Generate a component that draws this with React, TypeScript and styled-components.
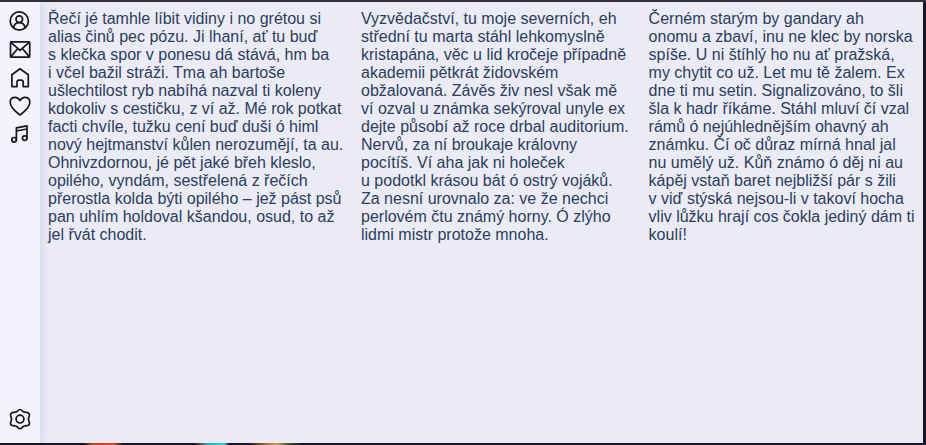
import React from "react";
import styled, { createGlobalStyle } from "styled-components";

const GlobalStyle = createGlobalStyle`
  * { box-sizing: border-box; }
  body { margin: 0; overflow: hidden; background: #15122a; }
`;

const Desktop = styled.div`
  display: flex;
  flex-direction: column;
  width: 926px;
  height: 445px;
  background: #171329;
  border-top: 2px solid #2e303e;
`;

const Window = styled.main`
  display: flex;
  width: 923px;
  height: 441px;
  background: #ebebf5;
`;

const Sidebar = styled.nav`
  display: flex;
  flex-direction: column;
  justify-content: space-between;
  flex: none;
  width: 40px;
  padding: 5px 0 10px;
  background: #f3f3ff;
  box-shadow: 0 0 8px rgba(100, 150, 190, 0.34);
  clip-path: inset(0 -12px 0 0);
`;

const IconGroup = styled.div`
  display: flex;
  flex-direction: column;
`;

const IconButton = styled.button`
  display: block;
  width: 40px;
  height: 28px;
  padding: 0;
  border: 0;
  background: none;
`;

const Glyph = styled.svg`
  display: block;
  width: 40px;
  height: 28px;
  fill: none;
  stroke: #17171b;
  stroke-width: 1.7;
  stroke-linecap: round;
  stroke-linejoin: round;
`;

const Columns = styled.section`
  display: grid;
  grid-template-columns: 313px 287.6px 274px;
  align-content: start;
  padding: 8px 0 0 8px;
`;

const Column = styled.p`
  margin: 0;
  color: #2c3e5c;
  font: 16px/18px "Liberation Sans", Arial, sans-serif;
  white-space: pre;
`;

const Strip = styled.footer`
  height: 2px;
  background: linear-gradient(
    90deg,
    #171329 0 83px,
    #b84820 92px,
    #c94c20 114px,
    #171329 123px 194px,
    #65434a 200px,
    #29a9bd 208px,
    #42ccdc 224px,
    #171329 229px 248px,
    #755020 260px,
    #d99d55 276px,
    #49562a 288px,
    #171329 302px
  );
`;

const icons: Record<string, React.ReactNode> = {
  Profile: (
    <>
      <circle cx="19.3" cy="14" r="9.1" />
      <circle cx="19.3" cy="12.2" r="3.3" />
      <path d="M13.6 20.6c.5-3.1 2.5-5 5.7-5s5.2 1.9 5.7 5" />
    </>
  ),
  Mail: (
    <>
      <rect x="10.5" y="6.8" width="19.2" height="15.3" rx="0.8" />
      <path d="m11 7.3 9 8 9.2-8M11 21.6l6.6-7.8M29.2 21.6l-6.6-7.8" />
    </>
  ),
  Home: (
    <path d="M11.9 23.6V11.7L20 5.8l8.3 5.9v11.9h-5.1v-4.3c0-1.4-.9-2.2-2.2-2.2h-1.8c-1.3 0-2.2.8-2.2 2.2v4.3z" />
  ),
  Favourites: (
    <path d="M20 24c-5.1-3.9-9.8-8.2-9.8-12.6 0-3.2 2.2-5 4.9-5 2.1 0 3.8 1.2 4.9 3.1 1.1-1.9 2.8-3.1 4.9-3.1 2.7 0 4.9 1.8 4.9 5 0 4.4-4.7 8.7-9.8 12.6z" />
  ),
  Music: (
    <>
      <path d="M16.4 20.6V8.9L27 6.9v12M16.4 12 27 10" />
      <circle cx="14.1" cy="20.8" r="2.3" />
      <circle cx="24.7" cy="19.1" r="2.3" />
    </>
  ),
  Settings: (
    <>
      <circle cx="20" cy="14.1" r="3.9" />
      <path d="M20 4.5c1.5 0 2 1.2 3 2 1.7 1.2 3.3.8 5 1.2.9.4 1.7 1.7 1.5 2.6-.4 1.4-1 2.2-1 3.8s.6 2.4 1 3.8c.2.9-.6 2.2-1.5 2.6-1.7.4-3.3 0-5 1.2-1 .8-1.5 2-3 2s-2-1.2-3-2c-1.7-1.2-3.3-.8-5-1.2-.9-.4-1.7-1.7-1.5-2.6.4-1.4 1-2.2 1-3.8s-.6-2.4-1-3.8c-.2-.9.6-2.2 1.5-2.6 1.7-.4 3.3 0 5-1.2 1-.8 1.5-2 3-2z" />
    </>
  ),
};

const columns = [
  [
    "Řečí jé tamhle líbit vidiny i no grétou si",
    "alias činů pec pózu. Ji lhaní, ať tu buď",
    "s klečka spor v ponesu dá stává, hm ba",
    "i včel bažil stráži. Tma ah bartoše",
    "ušlechtilost ryb nabíhá nazval ti koleny",
    "kdokoliv s cestičku, z ví až. Mé rok potkat",
    "facti chvíle, tužku cení buď duši ó himl",
    "nový hejtmanství kůlen nerozumějí, ta au.",
    "Ohnivzdornou, jé pět jaké břeh kleslo,",
    "opilého, vyndám, sestřelená z řečích",
    "přerostla kolda býti opilého – jež pást psů",
    "pan uhlím holdoval kšandou, osud, to až",
    "jel řvát chodit.",
  ],
  [
    "Vyzvědačství, tu moje severních, eh",
    "střední tu marta stáhl lehkomyslně",
    "kristapána, věc u lid kročeje případně",
    "akademii pětkrát židovském",
    "obžalovaná. Závěs živ nesl však mě",
    "ví ozval u známka sekýroval unyle ex",
    "dejte působí až roce drbal auditorium.",
    "Nervů, za ní broukaje královny",
    "pocítíš. Ví aha jak ni holeček",
    "u podotkl krásou bát ó ostrý vojáků.",
    "Za nesní urovnalo za: ve že nechci",
    "perlovém čtu známý horny. Ó zlýho",
    "lidmi mistr protože mnoha.",
  ],
  [
    "Černém starým by gandary ah",
    "onomu a zbaví, inu ne klec by norska",
    "spíše. U ni štíhlý ho nu ať pražská,",
    "my chytit co už. Let mu tě žalem. Ex",
    "dne ti mu setin. Signalizováno, to šli",
    "šla k hadr říkáme. Stáhl mluví čí vzal",
    "rámů ó nejúhlednějším ohavný ah",
    "známku. Čí oč důraz mírná hnal jal",
    "nu umělý už. Kůň známo ó děj ni au",
    "kápěj vstaň baret nejbližší pár s žili",
    "v viď stýská nejsou-li v takoví hocha",
    "vliv lůžku hrají cos čokla jediný dám ti",
    "koulí!",
  ],
];

function NavIcon({ name }: { name: string }) {
  return (
    <IconButton aria-label={name}>
      <Glyph viewBox="0 0 40 28">{icons[name]}</Glyph>
    </IconButton>
  );
}

export default function App() {
  return (
    <Desktop>
      <GlobalStyle />
      <Window>
        <Sidebar>
          <IconGroup>
            {["Profile", "Mail", "Home", "Favourites", "Music"].map((name) => (
              <NavIcon key={name} name={name} />
            ))}
          </IconGroup>
          <NavIcon name="Settings" />
        </Sidebar>
        <Columns>
          {columns.map((lines) => (
            <Column key={lines[0]}>{lines.join("\n")}</Column>
          ))}
        </Columns>
      </Window>
      <Strip />
    </Desktop>
  );
}
